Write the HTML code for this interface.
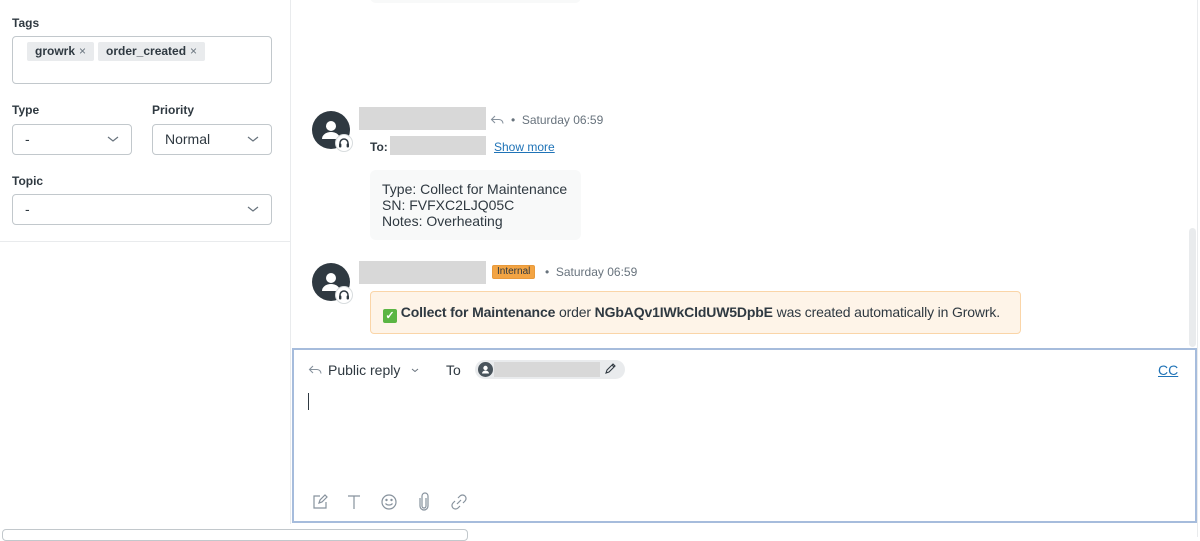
<!DOCTYPE html>
<html><head><meta charset="utf-8"><style>
*{box-sizing:border-box;margin:0;padding:0}
body{width:1200px;height:537px;overflow:hidden;background:#fff;font-family:"Liberation Sans",sans-serif;color:#2f3941;position:relative}
.abs{position:absolute}
.lbl{font-size:12px;font-weight:bold;color:#2f3941}
.box{border:1px solid #c2c8cc;border-radius:4px;background:#fff}
.tag{position:absolute;top:5px;height:19px;background:#e9ebed;border-radius:2px;font-size:12px;font-weight:bold;line-height:19px;padding:0 8px;color:#2f3941;white-space:nowrap}
.tag span{font-weight:normal;color:#68737d;margin-left:4px}
.sel{font-size:14px;line-height:29px;padding-left:12px}
.chev{position:absolute;right:12px;top:8px}
.av{position:absolute;width:38px;height:38px;border-radius:50%;background:#2f3941}
.gray{position:absolute;background:#d8d8d8}
.ic{position:absolute}
</style></head><body>
<div class="abs" style="left:290px;top:0;width:1px;height:524px;background:#e9ebed"></div>
<div class="abs" style="left:0;top:241px;width:290px;height:1px;background:#e9ebed"></div>
<div class="abs lbl" style="left:12px;top:16px">Tags</div>
<div class="abs box" style="left:12px;top:36px;width:260px;height:48px">
 <div class="tag" style="left:14px">growrk<span>×</span></div>
 <div class="tag" style="left:85px">order_created<span>×</span></div>
</div>
<div class="abs lbl" style="left:12px;top:103px">Type</div>
<div class="abs lbl" style="left:152px;top:103px">Priority</div>
<div class="abs box sel" style="left:12px;top:124px;width:120px;height:31px">-<svg class="chev" width="12" height="12" viewBox="0 0 12 12"><path d="M1 4l5 4 5-4" fill="none" stroke="#68737d" stroke-width="1.2"/></svg></div>
<div class="abs box sel" style="left:152px;top:124px;width:120px;height:31px">Normal<svg class="chev" width="12" height="12" viewBox="0 0 12 12"><path d="M1 4l5 4 5-4" fill="none" stroke="#68737d" stroke-width="1.2"/></svg></div>
<div class="abs lbl" style="left:12px;top:174px">Topic</div>
<div class="abs box sel" style="left:12px;top:194px;width:260px;height:31px">-<svg class="chev" width="12" height="12" viewBox="0 0 12 12"><path d="M1 4l5 4 5-4" fill="none" stroke="#68737d" stroke-width="1.2"/></svg></div>
<div class="abs" style="left:2px;top:529px;width:466px;height:12px;border:1px solid #c2c8cc;border-radius:4px"></div>

<div class="abs" style="left:370px;top:-10px;width:211px;height:13px;background:#f8f9f9;border-radius:6px"></div>

<div class="av" style="left:312px;top:111px"><svg width="38" height="38" viewBox="0 0 38 38"><circle cx="19" cy="15" r="5" fill="#fff"/><path d="M10 28a9 7 0 0 1 18 0z" fill="#fff"/></svg></div>
<div class="abs" style="left:335px;top:134px;width:18px;height:18px;border-radius:50%;background:#fff;border:1px solid #d8dcde"><svg width="16" height="16" viewBox="0 0 16 16"><path d="M4 10V8a4 4 0 0 1 8 0v2" fill="none" stroke="#2f3941" stroke-width="1.5"/><rect x="3" y="8.5" width="2.4" height="4" rx="1" fill="#2f3941"/><rect x="10.6" y="8.5" width="2.4" height="4" rx="1" fill="#2f3941"/></svg></div>
<div class="gray" style="left:359px;top:107px;width:127px;height:23px"></div>
<svg class="ic" style="left:490px;top:114px" width="14" height="12" viewBox="0 0 14 12"><path d="M5 2L1.5 5.5 5 9M1.5 5.5H9a4 4 0 0 1 4 4" fill="none" stroke="#87929d" stroke-width="1.1"/></svg>
<div class="abs" style="left:511px;top:113px;font-size:12px;color:#68737d;white-space:nowrap">•&nbsp;&nbsp;Saturday 06:59</div>
<div class="abs" style="left:370px;top:140px;font-size:12px;font-weight:bold">To:</div>
<div class="gray" style="left:390px;top:136px;width:96px;height:19px"></div>
<div class="abs" style="left:494px;top:140px;font-size:12px;color:#1f73b7;text-decoration:underline">Show more</div>
<div class="abs" style="left:370px;top:170px;width:211px;height:70px;background:#f8f9f9;border-radius:6px;padding:11px 12px;font-size:14px;line-height:16px">Type: Collect for Maintenance<br>SN: FVFXC2LJQ05C<br>Notes: Overheating</div>

<div class="av" style="left:312px;top:263px"><svg width="38" height="38" viewBox="0 0 38 38"><circle cx="19" cy="15" r="5" fill="#fff"/><path d="M10 28a9 7 0 0 1 18 0z" fill="#fff"/></svg></div>
<div class="abs" style="left:335px;top:286px;width:18px;height:18px;border-radius:50%;background:#fff;border:1px solid #d8dcde"><svg width="16" height="16" viewBox="0 0 16 16"><path d="M4 10V8a4 4 0 0 1 8 0v2" fill="none" stroke="#2f3941" stroke-width="1.5"/><rect x="3" y="8.5" width="2.4" height="4" rx="1" fill="#2f3941"/><rect x="10.6" y="8.5" width="2.4" height="4" rx="1" fill="#2f3941"/></svg></div>
<div class="gray" style="left:359px;top:261px;width:127px;height:23px"></div>
<div class="abs" style="left:492px;top:265px;height:14px;padding:0 4px;background:#f3a443;border:1px solid #e89a3c;border-radius:2px;font-size:10px;line-height:12px;color:#2f3941">Internal</div>
<div class="abs" style="left:545px;top:265px;font-size:12px;color:#68737d;white-space:nowrap">•&nbsp;&nbsp;Saturday 06:59</div>
<div class="abs" style="left:370px;top:291px;width:651px;height:43px;background:#fef4e8;border:1px solid #fad5a8;border-radius:4px;padding:0 12px;font-size:14px;line-height:41px;white-space:nowrap;letter-spacing:-0.15px;overflow:hidden"><span style="display:inline-block;width:14px;height:14px;background:#5bb543;border-radius:2px;color:#fff;font-size:11px;line-height:14px;text-align:center;vertical-align:-2px;font-weight:bold;letter-spacing:0">✓</span> <b>Collect for Maintenance</b> order <b>NGbAQv1IWkCldUW5DpbE</b> was created automatically in Growrk.</div>

<div class="abs" style="left:1189px;top:228px;width:7px;height:119px;background:#e9ebed;border-radius:4px"></div>
<div class="abs" style="left:1197px;top:0;width:1px;height:537px;background:#e9ebed"></div>

<div class="abs" style="left:292px;top:348px;width:905px;height:175px;border:2px solid #a6bcdc"></div>
<svg class="ic" style="left:308px;top:364px" width="14" height="12" viewBox="0 0 14 12"><path d="M5 2L1.5 5.5 5 9M1.5 5.5H9a4 4 0 0 1 4 4" fill="none" stroke="#87929d" stroke-width="1.1"/></svg>
<div class="abs" style="left:328px;top:362px;font-size:14px">Public reply</div>
<svg class="ic" style="left:410px;top:366px" width="10" height="8" viewBox="0 0 10 8"><path d="M2 3l3 2.5 3-2.5" fill="none" stroke="#68737d" stroke-width="1"/></svg>
<div class="abs" style="left:446px;top:362px;font-size:14px">To</div>
<div class="abs" style="left:475px;top:360px;width:150px;height:19px;background:#e9ebed;border-radius:10px"></div>
<div class="abs" style="left:478px;top:362px;width:15px;height:15px;border-radius:50%;background:#49545c"><svg width="15" height="15" viewBox="0 0 15 15"><circle cx="7.5" cy="6" r="2.2" fill="#fff"/><path d="M4 11.5a3.5 3 0 0 1 7 0z" fill="#fff"/></svg></div>
<div class="gray" style="left:494px;top:362px;width:106px;height:15px"></div>
<svg class="ic" style="left:603px;top:362px" width="14" height="14" viewBox="0 0 14 14"><path d="M3 11l1-3 6-6 2 2-6 6-3 1zM9 3l2 2" fill="none" stroke="#2f3941" stroke-width="1.1"/></svg>
<div class="abs" style="left:1158px;top:362px;font-size:14px;color:#1f73b7;text-decoration:underline">CC</div>
<div class="abs" style="left:308px;top:393px;width:1px;height:17px;background:#2f3941"></div>
<svg class="ic" style="left:311px;top:493px" width="18" height="18" viewBox="0 0 18 18" fill="none" stroke="#87929d" stroke-width="1.2"><path d="M9 3H3v12h12V9"/><path d="M8 10l1-3 5-5 2 2-5 5z"/></svg>
<svg class="ic" style="left:346px;top:493px" width="16" height="18" viewBox="0 0 16 18" fill="none" stroke="#87929d" stroke-width="1.2"><path d="M2 3h12M8 3v13"/></svg>
<svg class="ic" style="left:380px;top:493px" width="18" height="18" viewBox="0 0 18 18" fill="none" stroke="#87929d" stroke-width="1.2"><circle cx="9" cy="9" r="7"/><path d="M5.5 10.5a4 3 0 0 0 7 0"/><circle cx="6.5" cy="7" r=".6" fill="#87929d"/><circle cx="11.5" cy="7" r=".6" fill="#87929d"/></svg>
<svg class="ic" style="left:417px;top:492px" width="14" height="20" viewBox="0 0 14 20" fill="none" stroke="#87929d" stroke-width="1.2"><path d="M9 6v8a2 2 0 0 1-4 0V4a3 3 0 0 1 6 0v10a4 4 0 0 1-8 0V6"/></svg>
<svg class="ic" style="left:450px;top:493px" width="18" height="18" viewBox="0 0 18 18" fill="none" stroke="#87929d" stroke-width="1.2"><path d="M8 5l2-2a3 3 0 0 1 5 5l-2 2M10 13l-2 2a3 3 0 0 1-5-5l2-2M7 11l4-4"/></svg>
</body></html>
